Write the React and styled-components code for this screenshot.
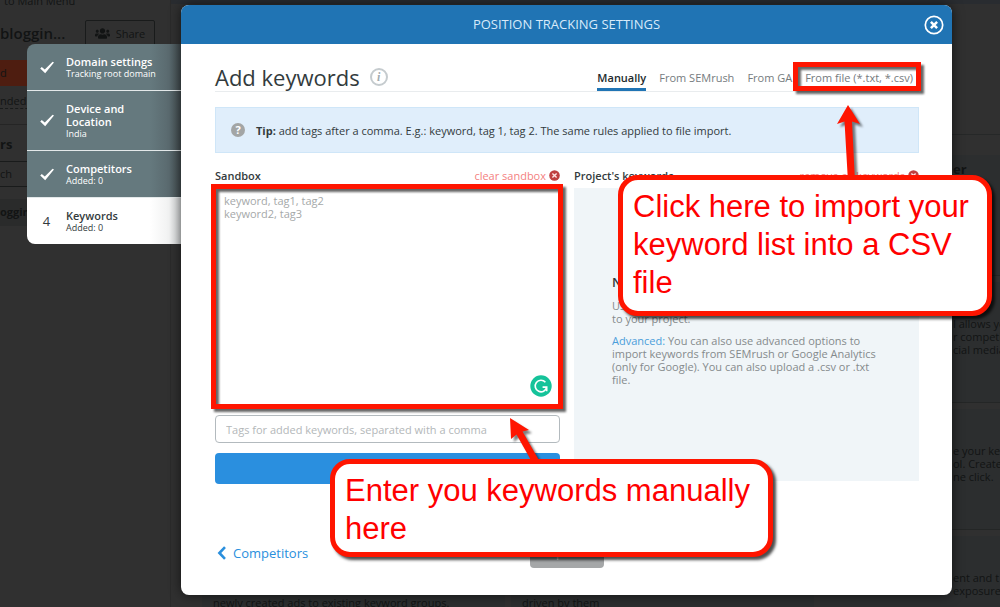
import React, { useState } from "react";
import styled, { createGlobalStyle } from "styled-components";
import { FaUsers } from "react-icons/fa";

const steps = [
  { title: "Domain settings", desc: "Tracking root domain", done: true },
  { title: "Device and Location", desc: "India", done: true },
  { title: "Competitors", desc: "Added: 0", done: true },
  { title: "Keywords", desc: "Added: 0", done: false },
];

const tabs = ["Manually", "From SEMrush", "From GA", "From file (*.txt, *.csv)"];

// cards of the dashboard behind the dialog
const cards = [
  {},
  {},
  { title: "er", lines: ["npp", "e", "ou"] },
  {},
  {},
  { lines: ["l allows you", "r competitors", "cial media"] },
  {},
  {},
  { lines: ["e your keywords", "ol. Create", "ne click."] },
  { lines: ["newly created ads to existing keyword groups."], low: true },
  { lines: ["driven by them"], low: true },
  { lines: ["ent and t", "exposure"] },
];

const CheckIcon = () => (
  <svg width="16" height="13" viewBox="0 0 16 13" aria-hidden="true">
    <path d="M1.2 7.6 2.8 6l3 2.6L13.6.8l1.4.8-8.8 10.6Z" fill="#ffffff" />
  </svg>
);

const CloseIcon = () => (
  <svg width="20" height="20" viewBox="0 0 20 20" aria-hidden="true">
    <circle cx="10" cy="10" r="8.7" fill="none" stroke="#ffffff" strokeWidth="1.7" />
    <path d="m6.9 6.9 6.2 6.2m0-6.2-6.2 6.2" stroke="#ffffff" strokeWidth="2.5" />
  </svg>
);

const ClearIcon = () => (
  <svg width="11" height="11" viewBox="0 0 11 11" aria-hidden="true">
    <circle cx="5.5" cy="5.5" r="5.3" fill="#bf4040" />
    <path d="m3.4 3.4 4.2 4.2m0-4.2L3.4 7.6" stroke="#ffe3e3" strokeWidth="1.4" />
  </svg>
);

const BackIcon = () => (
  <svg width="10" height="14" viewBox="0 0 10 14" aria-hidden="true">
    <path d="M8 1.2 2.4 7 8 12.8" fill="none" stroke="#2a8fdd" strokeWidth="2.6" />
  </svg>
);

const GrammarIcon = () => (
  <svg width="22" height="22" viewBox="0 0 22 22" aria-hidden="true">
    <circle cx="11" cy="11" r="10.7" fill="#15c39a" />
    <path
      d="M15.4 7.2a5.8 5.8 0 1 0 1.3 5M12.6 12.1h4.1v4.2"
      fill="none"
      stroke="#ffffff"
      strokeWidth="1.6"
    />
  </svg>
);

export default function App() {
  const [tab, setTab] = useState(tabs[0]);

  return (
    <Page>
      <GlobalStyle />
      <Background aria-hidden="true">
        <Sidebar>
          <MenuLink>to Main Menu</MenuLink>
          <ProjectRow>
            <ProjectName>bloggin...</ProjectName>
            <ShareBox>
              <FaUsers size={15} />
              Share
            </ShareBox>
          </ProjectRow>
          <RedBar>d</RedBar>
          <Dashed>nded</Dashed>
          <SideTitle>rs</SideTitle>
          <SideSearch>ch</SideSearch>
          <SideItem>oggin</SideItem>
        </Sidebar>
        <Main>
          <TopBar />
          <CardGrid>
            {cards.map((card, i) => (
              <Card key={i} $low={card.low} $edge={i % 3 === 2}>
                {card.title && <CardTitle>{card.title}</CardTitle>}
                {card.lines?.map((line) => (
                  <div key={line}>{line}</div>
                ))}
              </Card>
            ))}
          </CardGrid>
        </Main>
      </Background>

      <Overlay>
        <Steps>
          {steps.map((step, i) => (
            <Step key={step.title} type="button" $done={step.done}>
              <StepMark>{step.done ? <CheckIcon /> : i + 1}</StepMark>
              <span>
                <StepTitle>{step.title}</StepTitle>
                <StepDesc>{step.desc}</StepDesc>
              </span>
            </Step>
          ))}
        </Steps>

        <Dialog role="dialog" aria-labelledby="dialogTitle">
          <Header>
            <HeaderTitle id="dialogTitle">POSITION TRACKING SETTINGS</HeaderTitle>
            <CloseBtn type="button" aria-label="Close">
              <CloseIcon />
            </CloseBtn>
          </Header>

          <Body>
            <TitleRow>
              <Title>Add keywords</Title>
              <Info>i</Info>
              <Tabs>
                {tabs.map((name, i) => (
                  <TabWrap key={name}>
                    <Tab type="button" $active={name === tab} onClick={() => setTab(name)}>
                      {name}
                    </Tab>
                    {i === 3 && <TabMarker />}
                  </TabWrap>
                ))}
              </Tabs>
            </TitleRow>

            <Tip>
              <Help>?</Help>
              <span>
                <b>Tip:</b> add tags after a comma. E.g.: keyword, tag 1, tag 2. The same rules
                applied to file import.
              </span>
            </Tip>

            <Columns>
              <Column>
                <LabelRow>
                  <Label htmlFor="sandbox">Sandbox</Label>
                  <ClearBtn type="button">
                    clear sandbox
                    <ClearIcon />
                  </ClearBtn>
                </LabelRow>
                <SandboxWrap>
                  <Sandbox id="sandbox" placeholder={"keyword, tag1, tag2\nkeyword2, tag3"} />
                  <Grammar>
                    <GrammarIcon />
                  </Grammar>
                  <SandboxMarker />
                </SandboxWrap>
                <TagInput
                  type="text"
                  aria-label="Tags"
                  placeholder="Tags for added keywords, separated with a comma"
                />
                <AddBtn type="button">Add keywords</AddBtn>
              </Column>

              <Column>
                <LabelRow>
                  <Label as="h2">Project's keywords</Label>
                  <ClearBtn type="button">
                    remove all keywords
                    <ClearIcon />
                  </ClearBtn>
                </LabelRow>
                <Panel>
                  <PanelTitle>No keywords yet</PanelTitle>
                  <PanelText>
                    Use the sandbox on the left to add more keywords to your project.
                  </PanelText>
                  <PanelText>
                    <a href="#advanced">Advanced:</a> You can also use advanced options to import
                    keywords from SEMrush or Google Analytics (only for Google). You can also
                    upload a .csv or .txt file.
                  </PanelText>
                </Panel>
              </Column>
            </Columns>

            <Footer>
              <BackLink href="#competitors">
                <BackIcon />
                Competitors
              </BackLink>
              <UpdateBtn type="button">Update</UpdateBtn>
              <span />
            </Footer>
          </Body>

          <FileArrow width="40" height="80" viewBox="0 0 40 80" aria-hidden="true">
            <path d="M20 1 32 20l-8-2.500L27 78h-7L16.500 17.500 9 20Z" fill="#ff1500" />
          </FileArrow>
          <FileNote>Click here to import your keyword list into a CSV file</FileNote>
          <SandboxArrow width="40" height="50" viewBox="0 0 40 50" aria-hidden="true">
            <path d="M2 2 21 14l-6.500 1.500L32 46h-8L8.500 18.500 3 23Z" fill="#ff1500" />
          </SandboxArrow>
          <SandboxNote>Enter you keywords manually here</SandboxNote>
        </Dialog>
      </Overlay>
    </Page>
  );
}

const GlobalStyle = createGlobalStyle`
  * {
    box-sizing: border-box;
  }
  body {
    margin: 0;
    background-color: #303030;
    font-family: "Open Sans", "Noto Sans", sans-serif;
    font-size: 11px;
    line-height: 13px;
    color: #333b3d;
  }
  button, input, textarea {
    font: inherit;
  }
  button {
    padding: 0;
    border: 0;
    background: none;
    cursor: pointer;
  }
  h1, h2, h3, p {
    margin: 0;
  }
`;

const Page = styled.div`
  position: relative;
  min-height: 100vh;
  overflow: hidden;
`;

/* 배경 */
const Background = styled.div`
  position: absolute;
  inset: 0;
  display: grid;
  grid-template-columns: 171px 1fr;
  color: #121414;
`;
const Sidebar = styled.div`
  border-right: 1px solid #2a2a2a;
`;
const MenuLink = styled.div`
  height: 20px;
  padding-left: 4px;
  line-height: 1px;
  font-size: 11px;
`;
const ProjectRow = styled.div`
  display: flex;
  justify-content: space-between;
  align-items: center;
  height: 26px;
  padding-right: 15px;
`;
const ProjectName = styled.div`
  font-size: 15px;
  font-weight: 600;
`;
const ShareBox = styled.div`
  display: flex;
  align-items: center;
  justify-content: center;
  gap: 6px;
  width: 70px;
  height: 26px;
  border: 1px solid #191b1b;
  border-radius: 2px;
  font-size: 11px;
`;
const RedBar = styled.div`
  width: 155px;
  height: 26px;
  margin-top: 14px;
  background-color: #4e1d10;
  line-height: 26px;
  font-size: 11px;
`;
const Dashed = styled.div`
  width: 155px;
  margin-top: 8px;
  padding-bottom: 1px;
  border-bottom: 1px dashed #191b1b;
  font-size: 11px;
`;
const SideTitle = styled.div`
  margin-top: 15px;
  padding-top: 11px;
  border-top: 1px solid #252525;
  line-height: 16px;
  font-size: 13px;
  font-weight: 700;
`;
const SideSearch = styled.div`
  width: 155px;
  height: 26px;
  margin-top: 9px;
  border: 1px solid #191b1b;
  border-left: 0;
  line-height: 24px;
`;
const SideItem = styled.div`
  height: 27px;
  margin-top: 12px;
  background-color: #2a2b2b;
  line-height: 26px;
  font-weight: 700;
`;
const Main = styled.div`
  min-width: 0;
`;
const TopBar = styled.div`
  height: 4px;
  background-color: #292c30;
`;
const CardGrid = styled.div`
  display: grid;
  grid-template-columns: 303px 303px 1fr;
  grid-auto-rows: 121px;
  gap: 6px;
  margin-top: 130px;
  padding: 20px 0 0 31px;
  border-top: 1px solid #262828;
`;
const Card = styled.div`
  min-width: 0;
  padding: ${({ $low }) => ($low ? "60px" : "35px")} 0 0
    ${({ $edge }) => ($edge ? "133px" : "11px")};
  border-bottom: 1px solid #242626;
  background-color: #2c2e2f;
  white-space: nowrap;
  overflow: hidden;
`;
const CardTitle = styled.div`
  margin-top: -27px;
  padding-bottom: 12px;
  font-size: 13px;
  font-weight: 700;
`;

/* 모달 */
const Overlay = styled.div`
  position: relative;
  display: flex;
  align-items: flex-start;
  padding: 5px 48px 12px 27px;
`;
const Steps = styled.nav`
  flex: none;
  width: 154px;
  margin-top: 39px;
  border-radius: 8px 0 0 8px;
  overflow: hidden;
`;
const Step = styled.button`
  display: flex;
  align-items: center;
  width: 100%;
  padding: 11px 12px 11px 0;
  background: ${({ $done }) =>
    $done
      ? "linear-gradient(to right, #65797e 80%, #5a6a6f 92%, #424c4f)"
      : "linear-gradient(to right, #ffffff 80%, #f1f2f2 92%, #d0d3d4)"};
  color: ${({ $done }) => ($done ? "#ffffff" : "#333b3d")};
  text-align: left;
  & + & {
    border-top: 1px solid #e3e8e9;
  }
`;
const StepMark = styled.span`
  display: flex;
  flex: none;
  justify-content: center;
  width: 39px;
  font-size: 13px;
`;
const StepTitle = styled.span`
  display: block;
  font-weight: 600;
`;
const StepDesc = styled.span`
  display: block;
  font-size: 9px;
  line-height: 11px;
`;
const Dialog = styled.div`
  position: relative;
  flex: 1;
  min-width: 0;
  border-radius: 8px;
  background-color: #ffffff;
  box-shadow: 0 0 12px rgba(0, 0, 0, 0.6);
`;
const Header = styled.div`
  display: grid;
  grid-template-columns: 20px 1fr 20px;
  align-items: center;
  height: 39px;
  padding: 0 8px;
  border-radius: 8px 8px 0 0;
  background-color: #2074b4;
`;
const HeaderTitle = styled.h1`
  grid-column: 2;
  text-align: center;
  font-size: 13px;
  font-weight: 400;
  color: #d8eafa;
`;
const CloseBtn = styled.button`
  display: flex;
`;
const Body = styled.div`
  padding: 18px 33px 27px 34px;
`;
const TitleRow = styled.div`
  display: flex;
  align-items: center;
  height: 30px;
  border-bottom: 1px solid #e9ecee;
`;
const Title = styled.h2`
  font-size: 22px;
  line-height: 28px;
  font-weight: 400;
`;
const Info = styled.span`
  width: 18px;
  height: 18px;
  margin-left: 10px;
  border: 2px solid #c5cbce;
  border-radius: 50%;
  text-align: center;
  font: italic 700 12px/14px "Liberation Serif", serif;
  color: #a3abae;
`;
const Tabs = styled.div`
  display: flex;
  align-self: flex-end;
  gap: 13px;
  margin-left: auto;
  padding-right: 6px;
`;
const TabWrap = styled.div`
  position: relative;
`;
const Tab = styled.button`
  display: block;
  height: 20px;
  padding-bottom: 4px;
  border-bottom: 3px solid ${({ $active }) => ($active ? "#2074b4" : "transparent")};
  color: ${({ $active }) => ($active ? "#222a2c" : "#757b7e")};
  font-weight: ${({ $active }) => ($active ? 600 : 400)};
  white-space: nowrap;
`;
const Marker = styled.div`
  position: absolute;
  border: 5px solid #ff1500;
  filter: drop-shadow(3px 3px 1px rgba(0, 0, 0, 0.6));
  pointer-events: none;
`;
const TabMarker = styled(Marker)`
  inset: -9px -8px 0 -12px;
`;
const Tip = styled.div`
  display: flex;
  align-items: center;
  gap: 11px;
  min-height: 46px;
  margin-top: 15px;
  padding: 0 15px;
  border: 1px solid #cfe6f8;
  background-color: #e0eefb;
`;
const Help = styled.span`
  flex: none;
  width: 14px;
  height: 14px;
  border-radius: 50%;
  background-color: #a3a5a5;
  text-align: center;
  line-height: 14px;
  font-weight: 700;
  color: #ffffff;
`;
const Columns = styled.div`
  display: grid;
  grid-template-columns: 1fr 1fr;
  gap: 14px;
  margin-top: 14px;
`;
const Column = styled.div`
  display: flex;
  flex-direction: column;
  min-width: 0;
`;
const LabelRow = styled.div`
  display: flex;
  justify-content: space-between;
  align-items: center;
  height: 16px;
  margin-bottom: 5px;
`;
const Label = styled.label`
  font-size: 11px;
  font-weight: 600;
`;
const ClearBtn = styled.button`
  display: flex;
  align-items: center;
  gap: 3px;
  color: #f47f7f;
`;
const SandboxWrap = styled.div`
  position: relative;
  height: 218px;
`;
const Sandbox = styled.textarea`
  display: block;
  width: 100%;
  height: 100%;
  padding: 6px 9px;
  border: 0;
  outline: none;
  resize: none;
  &::placeholder {
    color: #a5a8a9;
  }
`;
const Grammar = styled.span`
  position: absolute;
  right: 8px;
  bottom: 9px;
  display: flex;
`;
const SandboxMarker = styled(Marker)`
  inset: -4px -3px -3px -4px;
`;
const TagInput = styled.input`
  width: 100%;
  height: 28px;
  margin-top: 9px;
  padding: 0 10px;
  border: 1px solid #b3babe;
  border-radius: 4px;
  &::placeholder {
    color: #b3b7b9;
  }
`;
const AddBtn = styled.button`
  height: 31px;
  margin-top: 10px;
  border-radius: 4px;
  background-color: #2a8fdf;
  color: #ffffff;
`;
const Panel = styled.div`
  flex: 1;
  margin-bottom: 3px;
  padding: 86px 38px 0;
  background-color: #f0f5f8;
`;
const PanelTitle = styled.h3`
  font-size: 13px;
  line-height: 16px;
  font-weight: 600;
`;
const PanelText = styled.p`
  margin-top: 9px;
  color: #858a8c;
  a {
    color: #4a9edb;
    text-decoration: none;
  }
`;
const Footer = styled.div`
  display: grid;
  grid-template-columns: 1fr auto 1fr;
  align-items: center;
  margin-top: 53px;
`;
const BackLink = styled.a`
  display: flex;
  align-items: center;
  gap: 6px;
  padding-left: 2px;
  font-size: 13px;
  line-height: 16px;
  color: #2a8fdd;
  text-decoration: none;
`;
const UpdateBtn = styled.button`
  width: 74px;
  height: 31px;
  border-radius: 4px;
  background-color: #a5a7a8;
  color: #ffffff;
`;

/* 안내 말풍선 */
const Note = styled.div`
  position: absolute;
  padding: 8px 10px;
  border: 5px solid #ff1500;
  border-radius: 20px;
  background-color: #ffffff;
  box-shadow: 3px 3px 3px rgba(0, 0, 0, 0.7);
  font-family: "Liberation Sans", Arial, sans-serif;
  font-size: 31px;
  line-height: 38px;
  color: #ff0000;
`;
const FileNote = styled(Note)`
  top: 170px;
  right: -40px;
  width: 374px;
  height: 141px;
`;
const SandboxNote = styled(Note)`
  top: 454px;
  left: 149px;
  width: 443px;
  height: 98px;
`;
const Arrow = styled.svg`
  position: absolute;
  filter: drop-shadow(3px 3px 1px rgba(0, 0, 0, 0.5));
`;
const FileArrow = styled(Arrow)`
  top: 99px;
  right: 84px;
`;
const SandboxArrow = styled(Arrow)`
  top: 411px;
  left: 327px;
`;
